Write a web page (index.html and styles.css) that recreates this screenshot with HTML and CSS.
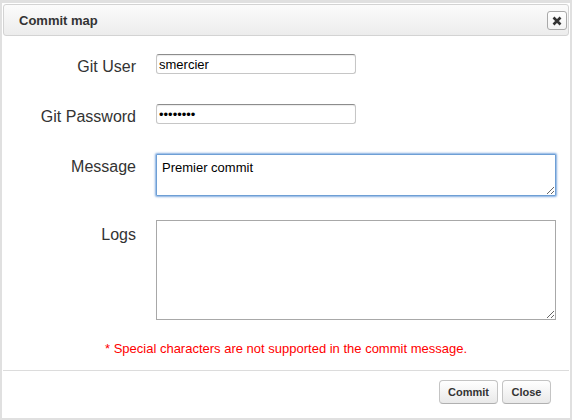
FILE: index.html
```html
<!DOCTYPE html>
<html>
<head>
<meta charset="utf-8">
<link rel="stylesheet" href="styles.css">
</head>
<body>
<div class="dialog">
  <div class="head">
    <span class="title">Commit map</span>
    <button class="x" type="button" aria-label="Close">
      <svg width="10" height="10" viewBox="0 0 10 10"><path d="M1.5 1.5 L8.5 8.5 M8.5 1.5 L1.5 8.5" stroke="#333" stroke-width="2.6" stroke-linecap="butt"/></svg>
    </button>
  </div>
  <div class="body">
    <div class="row r1">
      <label class="lbl">Git User</label>
      <input class="inp" type="text" value="smercier">
    </div>
    <div class="row r2">
      <label class="lbl">Git Password</label>
      <input class="inp" type="password" value="12345678">
    </div>
    <div class="row r3">
      <label class="lbl">Message</label>
      <textarea class="ta msg">Premier commit</textarea>
    </div>
    <div class="row r4">
      <label class="lbl lbl-logs">Logs</label>
      <textarea class="ta logs"></textarea>
    </div>
    <p class="note">* Special characters are not supported in the commit message.</p>
  </div>
  <div class="foot">
    <button class="btn btn-commit" type="button">Commit</button>
    <button class="btn btn-close" type="button">Close</button>
  </div>
</div>
</body>
</html>
```
FILE: styles.css
```css
html, body { margin: 0; padding: 0; }
body {
  background: #e6e6e6;
  font-family: "Liberation Sans", Arial, Helvetica, sans-serif;
  color: #333;
}
.dialog {
  width: 572px;
  height: 420px;
  box-sizing: border-box;
  background: #fff;
  border: 2px solid #e0e0e0;
  border-top-width: 3px;
  display: flex;
  flex-direction: column;
}
.head {
  margin: 1px;
  height: 32px;
  box-sizing: border-box;
  border: 1px solid #d3d3d3;
  border-radius: 3px;
  background: linear-gradient(#fbfbfb, #ececec);
  display: flex;
  align-items: center;
  justify-content: space-between;
  padding: 0 1px 0 15px;
}
.title {
  font-weight: bold;
  font-size: 13px;
  color: #333;
}
.x {
  width: 20px;
  height: 19px;
  box-sizing: border-box;
  margin-top: 1px;
  padding: 0;
  border: 1px solid #a9a9a9;
  border-radius: 3px;
  background: linear-gradient(#fff, #f3f3f3);
  display: flex;
  align-items: center;
  justify-content: center;
}
.body {
  padding-top: 17px;
  flex: 1;
}
.row {
  display: flex;
  align-items: flex-start;
}
.r1, .r2 { margin-bottom: 30px; }
.r3 { margin-bottom: 24px; }
.lbl {
  width: 134px;
  height: 20px;
  box-sizing: border-box;
  margin-right: 20px;
  text-align: right;
  font-size: 16px;
  line-height: 20px;
  padding-top: 3px;
  color: #333;
  white-space: nowrap;
}
.lbl-logs { padding-top: 5px; }
.inp {
  width: 200px;
  height: 20px;
  box-sizing: border-box;
  margin: 0;
  padding: 0 2px;
  border: 1px solid #c6c6c6;
  border-top-color: #8c8c8c;
  border-radius: 3px;
  box-shadow: inset 0 1px 1px rgba(0,0,0,0.08);
  font-family: "Liberation Sans", Arial, sans-serif;
  font-size: 13px;
  color: #000;
  outline: none;
}
.ta {
  width: 400px;
  box-sizing: border-box;
  margin: 0;
  font-family: "Liberation Sans", Arial, sans-serif;
  font-size: 13px;
  color: #000;
  outline: none;
}
.msg {
  height: 42px;
  padding: 5px 5px 3px;
  border: 1px solid #6e9fd5;
  border-radius: 1px;
  box-shadow: 0 0 2px 1px rgba(90,145,215,0.75);
}
.logs {
  height: 100px;
  border: 1px solid #a8a8a8;
  padding: 4px 5px;
}
.note {
  margin: 21px 0 0 0;
  text-align: center;
  font-size: 13px;
  line-height: 16px;
  color: #f00;
}
.foot {
  margin: 0 1px;
  border-top: 1px solid #dcdcdc;
  padding: 9px 18px 14px 0;
  display: flex;
  justify-content: flex-end;
  gap: 4px;
}
.btn {
  height: 24px;
  box-sizing: border-box;
  padding: 0;
  border: 1px solid #c4c4c4;
  border-bottom-color: #b0b0b0;
  border-radius: 4px;
  background: linear-gradient(#ffffff, #e9e9e9);
  font-family: "Liberation Sans", Arial, sans-serif;
  font-weight: bold;
  font-size: 11px;
  color: #333;
}
.btn-commit { width: 59px; }
.btn-close { width: 49px; }
```
